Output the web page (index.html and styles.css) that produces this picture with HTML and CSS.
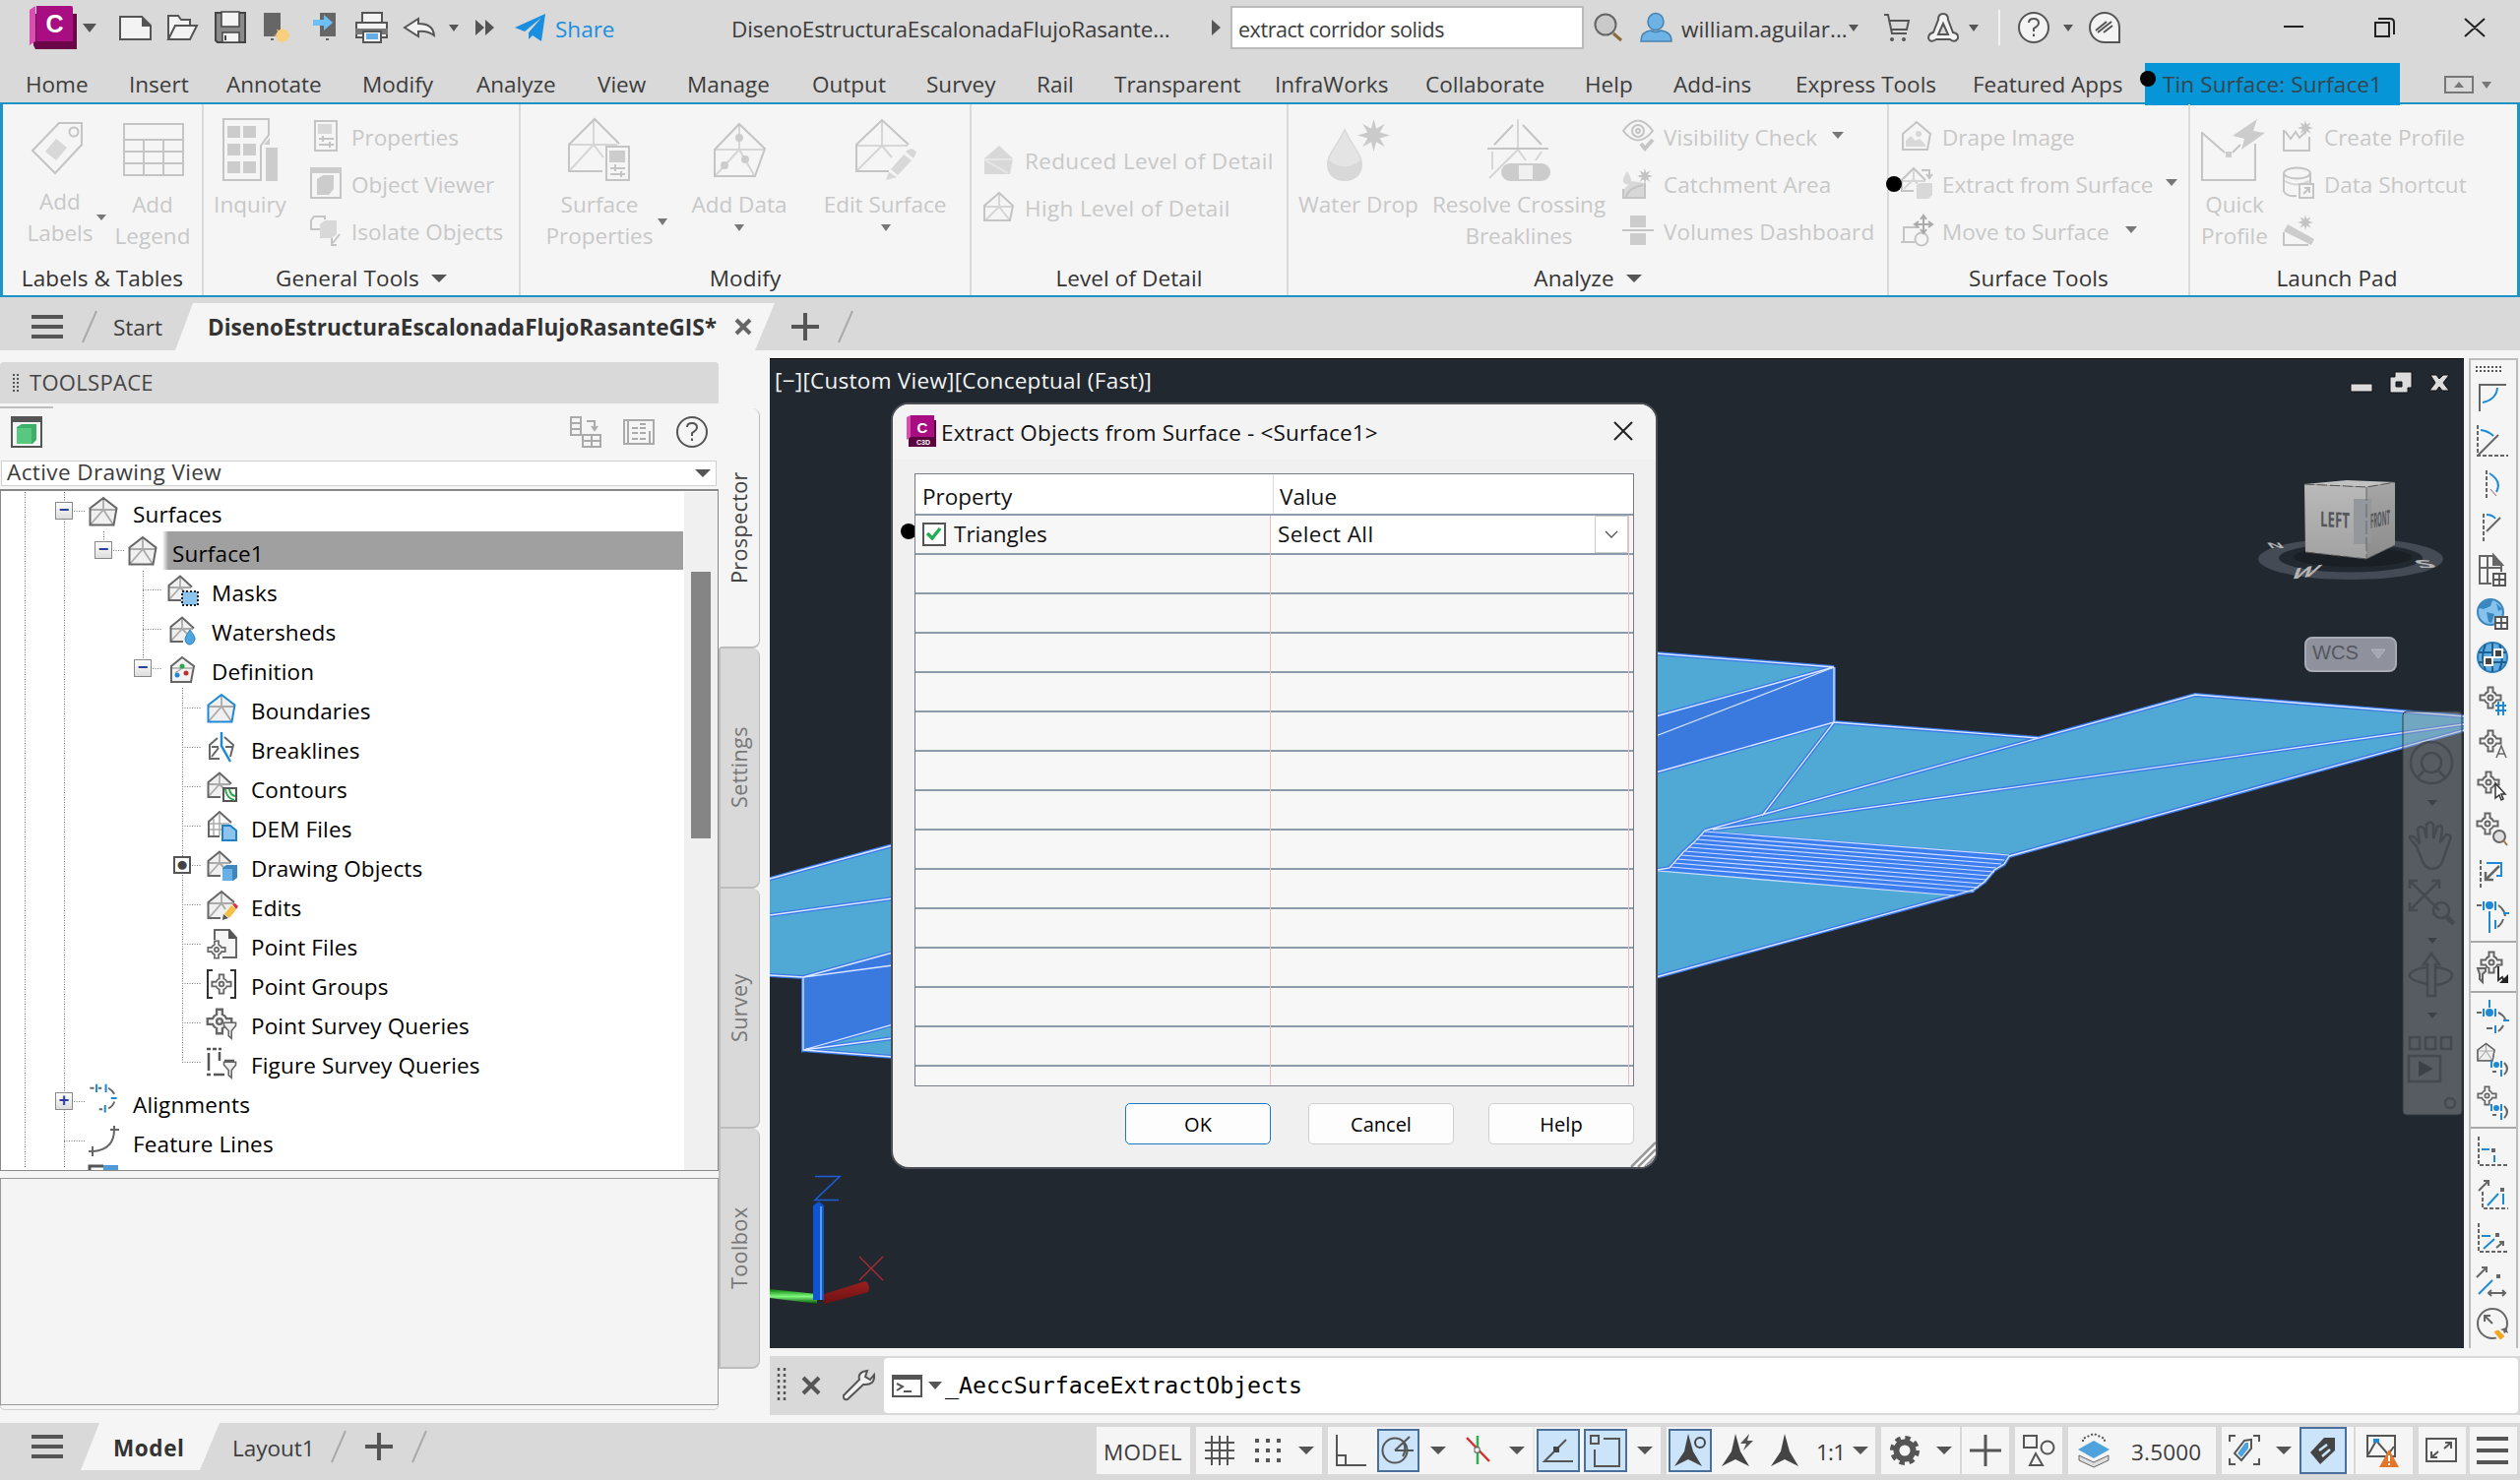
FILE: index.html
```html
<!DOCTYPE html>
<html lang="en">
<head>
<meta charset="utf-8">
<title>DisenoEstructuraEscalonadaFlujoRasanteGIS</title>
<link rel="stylesheet" href="styles.css">
</head>
<body>
<svg class="defs" width="0" height="0">
  <defs>
    <symbol id="surf" viewBox="0 0 30 31"><path class="sf" d="M15 2L28.500 12.500L25.500 29.500H1.500V12.500Z"/><path class="si" d="M15 3V14L2 29M15 14L25 29M2 14H28"/><path class="so" d="M15 2L28.500 12.500L25.500 29.500H1.500V12.500Z"/></symbol>
    <symbol id="surfs" viewBox="0 0 30 31"><path class="sf" d="M13 1.500L25 12.500L14 26H1.500V11Z"/><path class="si" d="M13 3V13L2 25M13 13L18 18M2 13H24"/><path class="so" d="M14 26H1.500V11L13 1.500L25 12.500"/></symbol>
    <symbol id="star" viewBox="0 0 32 32"><path d="M16 0L18.500 9.500L27 4.500L22 13L32 16L22 19L27 27.500L18.500 22.500L16 32L13.500 22.500L5 27.500L10 19L0 16L10 13L5 4.500L13.500 9.500Z"/></symbol>
    <symbol id="pt" viewBox="0 0 24 24"><path d="M9.500 1.500H14.500V6A6 6 0 0 1 18 9.500H22.500V14.500H18A6 6 0 0 1 14.500 18V22.500H9.500V18A6 6 0 0 1 6 14.500H1.500V9.500H6A6 6 0 0 1 9.500 6Z" fill="#f5f5f5" stroke="#666" stroke-width="2"/><circle cx="12" cy="12" r="2.500" fill="none" stroke="#666" stroke-width="2"/></symbol>
    <symbol id="funnel" viewBox="0 0 16 22"><path d="M1 1.500H15V5L10 11V20L6.500 17V11L1 5Z" fill="#eee" stroke="#666" stroke-width="1.800"/></symbol>
    <symbol id="grid4" viewBox="0 0 14 14"><path d="M0 0H14V14H0Z" fill="#f5f5f5"/><path d="M1 1H13V13H1ZM7 1V13M1 7H13" fill="none" stroke="#555" stroke-width="1.800"/></symbol>
    <symbol id="align" viewBox="0 0 32 34"><path d="M0 5H5M10 5H14M22 5Q27 8 29 12M29 21Q27 27 22 29M11 30H15" fill="none" stroke="#666" stroke-width="2.200"/><path d="M8 0V10M19 0V10M25 17H32M18 25V34" stroke="#1e8ad6" stroke-width="2.400"/></symbol>
    <linearGradient id="cubeL" x1="0" y1="0" x2="0" y2="1"><stop offset="0" stop-color="#b9b9b9"/><stop offset="1" stop-color="#a2a2a3"/></linearGradient>
    <linearGradient id="cubeF" x1="0" y1="0" x2="0" y2="1"><stop offset="0" stop-color="#a6a6a6"/><stop offset="1" stop-color="#8c8c8d"/></linearGradient>
    <linearGradient id="red" x1="0" y1="0" x2="0" y2="1"><stop offset="0" stop-color="#9c2020"/><stop offset="1" stop-color="#6c1010"/></linearGradient>
    <linearGradient id="grn" x1="0" y1="0" x2="0" y2="1"><stop offset="0" stop-color="#0a7a0a"/><stop offset=".5" stop-color="#7dfa7d"/><stop offset="1" stop-color="#044a04"/></linearGradient>
  </defs>
</svg>

<header class="titlebar">
  <svg width="110" height="62" viewBox="0 0 110 62"><path d="M34 14H78V50H36L34 46Z" fill="#6a0547"/><path d="M30 10L36 6V42L30 46Z" fill="#d94fb0"/><path d="M37 6H72Q74 6 74 8V42H37Z" fill="#a90d82"/><text x="55.500" y="33" class="logo-c">C</text><path d="M84 24H98L91 33Z" fill="#555"/></svg>
  <svg width="48" height="62" viewBox="110 0 48 62"><path d="M122 17H144L153 26V40H122Z" class="o"/><path d="M144 16L154 27H144Z" fill="#555"/></svg>
  <svg width="50" height="62" viewBox="158 0 50 62"><path d="M171 40V16H181L184 20H193V26" class="o"/><path d="M171 40L178 26H200L193 40Z" class="o"/></svg>
  <svg width="50" height="62" viewBox="208 0 50 62"><path d="M219 13H249V43H221L219 41Z" fill="#8a8a8a" stroke="#444" stroke-width="2"/><path d="M225 12H243V27H225Z" fill="#f3f3f3" stroke="#444" stroke-width="1.500"/><path d="M226 33H243V43H226Z" fill="#f3f3f3" stroke="#444" stroke-width="1.500"/><path d="M229 36V41" stroke="#444" stroke-width="2"/></svg>
  <svg width="50" height="62" viewBox="258 0 50 62"><path d="M268 13H285V37H268Z" fill="#666"/><path d="M275 40H278" stroke="#666" stroke-width="2"/><use href="#star" x="278" y="27" width="18" height="18" fill="#f9cf7c"/><circle cx="287" cy="36" r="6.500" fill="#f9cf7c"/></svg>
  <svg width="46" height="62" viewBox="308 0 46 62"><path d="M325 13H341V37H325Z" fill="#666"/><path d="M331 40H334" stroke="#666" stroke-width="2"/><path d="M318 20H329V15L338 23L329 31V26H318Z" fill="#6cc0f7"/></svg>
  <svg width="50" height="62" viewBox="354 0 50 62"><path d="M368 23V13H388V23" class="o"/><path d="M362 23H393V38H362Z" class="o"/><path d="M361 29H394V35H361Z" fill="#777"/><path d="M369 32H387V43H369Z" class="o"/><path d="M372 34H384V40H372Z" fill="#62ade6"/></svg>
  <svg width="48" height="62" viewBox="404 0 48 62"><path d="M411 28L425 19V24Q440 24 441 36Q434 31 425 32V37Z" class="o"/></svg>
  <svg width="66" height="62" viewBox="452 0 66 62"><path d="M456 25H466L461 32ZM483 20L492 28L483 36ZM493 20L502 28L493 36Z" fill="#555"/></svg>
  <svg width="45" height="62" viewBox="518 0 45 62"><path d="M523 28L554 14L550 42L541 36L537 40V33L550 18L533 32Z" fill="#1a8ee0"/></svg>
  <span class="share">Share</span>
  <span class="doc-title">DisenoEstructuraEscalonadaFlujoRasante...</span>
  <svg width="50" height="62" viewBox="1200 0 50 62"><path d="M1231 20L1240 28L1231 36Z" fill="#555"/></svg>
  <div class="search">extract corridor solids</div>
  <svg width="48" height="62" viewBox="1609 0 48 62"><path d="M1639 34L1647 41" stroke="#8a6a3a" stroke-width="3"/><circle cx="1631" cy="25" r="10.500" fill="#c9c9c9" stroke="#666" stroke-width="2"/></svg>
  <svg width="50" height="62" viewBox="1657 0 50 62"><ellipse cx="1682" cy="22" rx="8" ry="8.500" fill="#6db3e6" stroke="#4682b0" stroke-width="1.500"/><path d="M1667 42Q1667 32 1677 31Q1682 34 1687 31Q1698 32 1698 42Z" fill="#6db3e6" stroke="#4682b0" stroke-width="1.500"/></svg>
  <span class="user">william.aguilar...</span>
  <svg width="28" height="62" viewBox="1876 0 28 62"><path d="M1878 25H1888L1883 32Z" fill="#555"/></svg>
  <svg width="46" height="62" viewBox="1904 0 46 62"><path d="M1914 15H1918L1922 34H1937M1919 21H1939L1937 30H1921" class="n"/><circle cx="1922" cy="40" r="2" fill="#555"/><circle cx="1934" cy="40" r="2" fill="#555"/></svg>
  <svg width="90" height="62" viewBox="1950 0 90 62"><path d="M1974 14Q1979 14 1979 20L1984 33Q1990 34 1989 39Q1986 44 1981 40H1967Q1961 44 1959 39Q1959 34 1964 33L1969 20Q1969 14 1974 14ZM1974 24L1969 35H1979Z" class="o"/><path d="M2000 25H2010L2005 32Z" fill="#555"/><path d="M2031 10V46" stroke="#f2f2f2" stroke-width="2"/></svg>
  <svg width="74" height="62" viewBox="2040 0 74 62"><circle cx="2066" cy="28" r="15" class="o"/><path d="M2061 23Q2061 19 2066 19Q2071 19 2071 23.500Q2071 26 2066 29V32M2066 34.500V37" class="n"/><path d="M2096 25H2106L2101 32Z" fill="#555"/></svg>
  <svg width="60" height="62" viewBox="2114 0 60 62"><path d="M2138 13A15 15 0 1 0 2138 43H2153V28A15 15 0 0 0 2138 13Z" class="o"/><path d="M2129 31L2140 22M2131 33L2145 22M2137 33L2146 26" class="n"/></svg>
  <svg class="win-btns" width="386" height="62" viewBox="2174 0 386 62"><path d="M2320 27H2340M2504 19L2524 37M2524 19L2504 37M2413 23H2427V37H2413ZM2416 19H2428Q2432 19 2432 23V35" fill="none" stroke="#222" stroke-width="2"/></svg>
</header>

<nav class="tabs">
  <span>Home</span><span>Insert</span><span>Annotate</span><span>Modify</span><span>Analyze</span><span>View</span><span>Manage</span><span>Output</span><span>Survey</span><span>Rail</span><span>Transparent</span><span>InfraWorks</span><span>Collaborate</span><span>Help</span><span>Add-ins</span><span>Express Tools</span><span>Featured Apps</span>
  <span class="ctx">Tin Surface: Surface1<i class="dot dot-tab"></i></span>
  <svg width="122" height="40" viewBox="2438 64 122 40"><path d="M2484 78H2512V94H2484Z" fill="none" stroke="#777" stroke-width="2"/><path d="M2493 89H2503L2498 83ZM2521 83H2531L2526 90Z" fill="#777"/></svg>
</nav>

<section class="ribbon">
  <div class="panel w1">
    <div class="body">
      <div class="big b1 up"><svg width="116" height="84" viewBox="3 106 116 84"><path d="M60 125H83V147L56 176L33 153Z"/><circle cx="75" cy="134" r="4.500"/><path class="f" d="M57 141L68 150L57 163L46 154Z"/><path class="a" d="M98 218H108L103 224Z"/></svg><span>Add<br>Labels</span></div>
      <div class="big b2"><svg width="72" height="84" viewBox="119 106 72 84"><path d="M126 126H186V178H126ZM126 142H186M126 154H186M126 166H186M146 142V178M166 142V178"/></svg><span>Add<br>Legend</span></div>
    </div>
    <h3>Labels &amp; Tables</h3>
  </div>
  <div class="panel w2">
    <div class="body">
      <div class="big b3"><svg width="94" height="84" viewBox="207 106 94 84"><path d="M227 121H273V137L265 148V183H227Z"/><path class="f2" d="M231 128h13v12h-13zM247 128h13v12h-13zM231 146h13v12h-13zM247 146h13v12h-13zM231 164h13v12h-13zM247 164h13v12h-13zM268 147L274 140V147ZM270 150h12v34h-12z"/></svg><span>Inquiry</span></div>
      <div class="rows">
        <div class="row"><svg width="56" height="48" viewBox="301 115 56 48"><path d="M320 123H342V153H320ZM324 141H339M324 147H339M328 138V144M335 144V150"/><path class="f" d="M323 126h14v10h-14z"/></svg>Properties</div>
        <div class="row"><svg width="56" height="48" viewBox="301 163 56 48"><path d="M316 171H346V201H316Z"/><path class="f2" d="M315 170h32v6h-32zM322 182L328 178H339V192L334 198H322Z"/></svg>Object Viewer</div>
        <div class="row"><svg width="56" height="48" viewBox="301 211 56 48"><path d="M325 233H316V224L319 220H330V223M345 238L338 247M337 242V249H342"/><path class="f" d="M325 228L330 224H342V238L337 242H325Z"/></svg>Isolate Objects</div>
      </div>
    </div>
    <h3>General Tools <i class="tri"></i></h3>
  </div>
  <div class="panel w3">
    <div class="body">
      <div class="big b4"><svg width="160" height="84" viewBox="529 106 160 84"><path class="l" d="M603 122V147L579 173M603 147L613 160M578 147H627"/><path d="M612 174H578V147L604 121L629 146"/><path d="M616 149H639V183H616ZM620 171H635M620 177H635M625 167V174M631 174V180"/><path class="f2" d="M619 153h16v12h-16z"/><path class="a" d="M668 222H678L673 229Z"/></svg><span>Surface<br>Properties</span></div>
      <div class="big b5"><svg width="124" height="84" viewBox="689 106 124 84"><path class="l" d="M751 127V152L727 178M751 152L766 178M726 152H777"/><path d="M751 126L777 151L767 179H726V152Z"/><path class="f2" d="M747 140a4 4 0 1 0 8 0a4 4 0 1 0-8 0M753 162a4 4 0 1 0 8 0a4 4 0 1 0-8 0M732 168a4 4 0 1 0 8 0a4 4 0 1 0-8 0"/><path class="a" d="M746 228H756L751 235Z"/></svg><span>Add Data</span></div>
      <div class="big b6"><svg width="172" height="84" viewBox="813 106 172 84"><path class="l" d="M896 123V148L871 173M896 148L906 160M870 148H922"/><path d="M903 174H870V147L896 122L923 147"/><path class="f" d="M905 172L918 157L926 163L912 178ZM920 154Q926 148 931 155L928 161ZM900 183L903 175L911 180Z"/><path class="a" d="M895 228H905L900 235Z"/></svg><span>Edit Surface</span></div>
    </div>
    <h3>Modify</h3>
  </div>
  <div class="panel w4">
    <div class="rows lod">
      <div class="row"><svg width="54" height="48" viewBox="987 139 54 48"><path class="f" d="M1015 148L1029 161L1026 177H1000V161Z"/><path class="l2" d="M1000 162H1029M1001 163L1024 176"/></svg>Reduced Level of Detail</div>
      <div class="row"><svg width="54" height="48" viewBox="987 187 54 48"><path class="l" d="M1015 197V210L1001 224M1015 210L1026 224M1000 210H1028"/><path d="M1015 196L1029 209L1026 224H1000V209Z"/></svg>High Level of Detail</div>
    </div>
    <h3>Level of Detail</h3>
  </div>
  <div class="panel w5">
    <div class="body">
      <div class="big b7"><svg width="142" height="84" viewBox="1309 106 142 84"><path class="f" d="M1366 130C1374 148 1384 156 1384 167C1384 178 1376 184 1366 184C1356 184 1348 178 1348 167C1348 156 1358 148 1366 130Z"/><path fill="#e4e4e4" stroke="none" d="M1366 133C1372 147 1380 153 1382 163Q1366 176 1350 163C1352 153 1360 147 1366 133Z"/><use href="#star" x="1379" y="121" width="33" height="33" fill="#cacaca" stroke="none"/></svg><span>Water Drop</span></div>
      <div class="big b8"><svg width="184" height="84" viewBox="1451 106 184 84"><path class="l" d="M1542 121V152L1513 181M1542 152L1550 163M1516 154V172M1566 154L1560 163"/><path d="M1537 127L1518 147M1547 127L1566 147M1511 151H1573"/><rect class="f2" x="1525" y="166" width="50" height="18" rx="9"/><path fill="#f0f0f0" stroke="none" d="M1543 168h14v14h-14z"/></svg><span>Resolve Crossing<br>Breaklines</span></div>
      <div class="rows">
        <div class="row"><svg width="55" height="48" viewBox="1635 115 55 48"><path d="M1649 133Q1664 112 1679 133Q1664 152 1649 133Z"/><circle cx="1664" cy="133" r="6"/><circle cx="1664" cy="133" r="2"/><path d="M1667 146L1671 151L1679 142" stroke-width="4"/></svg>Visibility Check<i class="tri s"></i></div>
        <div class="row"><svg width="55" height="48" viewBox="1635 163 55 48"><path class="f" d="M1653 174Q1658 182 1657 185Q1653 190 1649 185Q1648 182 1653 174ZM1649 193L1658 184L1671 186V202H1649Z"/><path d="M1649 192V201H1671V186M1652 200Q1654 191 1669 188"/><use href="#star" x="1663" y="171" width="16" height="16" fill="#c4c4c4" stroke="none"/></svg>Catchment Area</div>
        <div class="row"><svg width="55" height="48" viewBox="1635 211 55 48"><path d="M1648 234H1680"/><path class="f2" d="M1656 219h16v12h-16zM1656 237h16v12h-16z"/></svg>Volumes Dashboard</div>
      </div>
    </div>
    <h3>Analyze <i class="tri"></i></h3>
  </div>
  <div class="panel w6">
    <i class="dot dot-ribbon"></i>
    <div class="rows">
      <div class="row"><svg width="54" height="48" viewBox="1919 115 54 48"><path d="M1947 124L1961 136L1958 152H1933V136Z"/><path class="f" d="M1936 149V143L1941 138L1946 143L1950 141L1956 147V149Z"/><circle class="f" cx="1949" cy="136" r="3"/></svg>Drape Image</div>
      <div class="row"><svg width="54" height="48" viewBox="1919 163 54 48"><path class="l" d="M1944 172V182L1934 192M1944 182L1948 187M1933 184H1956"/><path d="M1944 194H1932V183L1944 171L1956 183M1952 173H1960V180M1957 177L1960 181L1963 177"/><path class="f" d="M1947 188L1951 186H1963V198L1959 202H1947Z"/></svg>Extract from Surface<i class="tri s"></i></div>
      <div class="row"><svg width="54" height="48" viewBox="1919 211 54 48"><path d="M1950 231H1934V246M1931 246H1945"/><circle cx="1952" cy="243" r="6.500"/><path d="M1954 220V236M1946 228H1962M1951 223L1954 219L1957 223M1951 233L1954 237L1957 233M1949 225L1945 228L1949 231M1959 225L1963 228L1959 231" stroke="#aaa"/></svg>Move to Surface<i class="tri s"></i></div>
    </div>
    <h3>Surface Tools</h3>
  </div>
  <div class="panel w7">
    <div class="body">
      <div class="big b9"><svg width="90" height="84" viewBox="2225 106 90 84"><path d="M2237 134V183H2291V146M2237 135L2260 155M2268 155L2276 147"/><path class="f2" d="M2293 121L2268 138L2280 141L2277 152L2301 135L2289 133ZM2261 154h6v6h-6z"/></svg><span>Quick<br>Profile</span></div>
      <div class="rows">
        <div class="row"><svg width="46" height="48" viewBox="2315 115 46 48"><path d="M2320 132V153H2346V139M2321 133L2327 141L2332 134L2336 140L2342 134"/><use href="#star" x="2334" y="122" width="16" height="16" fill="#c4c4c4" stroke="none"/></svg>Create Profile</div>
        <div class="row"><svg width="46" height="48" viewBox="2315 163 46 48"><path d="M2320 176V194Q2322 200 2333 199M2347 176V186"/><ellipse cx="2333.500" cy="176" rx="13.500" ry="5.500"/><path class="l" d="M2321 184Q2333 191 2346 184"/><path d="M2336 187H2350V201H2336ZM2340 197L2346 191M2341 191H2346V196"/></svg>Data Shortcut</div>
        <div class="row"><svg width="46" height="48" viewBox="2315 211 46 48"><path d="M2320 236V249H2345"/><path class="f2" d="M2320 235L2324 228L2351 243L2348 249Z"/><use href="#star" x="2334" y="218" width="16" height="16" fill="#c4c4c4" stroke="none"/></svg></div>
      </div>
    </div>
    <h3>Launch Pad</h3>
  </div>
</section>

<div class="doctabs">
  <svg width="115" height="54" viewBox="0 302 115 54"><path d="M32 322H64M32 332H64M32 342H64" stroke="#555" stroke-width="4"/><path d="M98 316L84 348" stroke="#aaa" stroke-width="2"/></svg>
  <span class="start">Start</span>
  <div class="active-doc"><b>DisenoEstructuraEscalonadaFlujoRasanteGIS*</b><svg width="20" height="20" viewBox="0 0 20 20"><path d="M3 3L17 17M17 3L3 17" stroke="#666" stroke-width="4"/></svg></div>
  <svg width="100" height="54" viewBox="787 302 100 54"><path d="M804 332H832M818 318V346" stroke="#555" stroke-width="4"/><path d="M866 316L852 348" stroke="#aaa" stroke-width="2"/></svg>
</div>

<main class="work">
  <aside class="toolspace">
    <div class="left">
      <div class="ts-title"><svg width="30" height="42" viewBox="0 368 30 42"><path d="M14 380V400M18 380V400" stroke="#555" stroke-width="2" stroke-dasharray="2 2"/></svg>TOOLSPACE</div>
      <div class="ts-tools">
        <svg width="60" height="58" viewBox="0 410 60 58"><path d="M0 414H54" stroke="#888" stroke-width="1"/><path d="M12 424H42V454H12Z" fill="#f5f5f5" stroke="#555" stroke-width="2"/><path d="M11 423H43V429H11Z" fill="#555"/><path d="M17 434L22 431H37V447L33 451H17Z" fill="#3fae68"/><path d="M17 435H32V451H17Z" fill="#58c880"/></svg>
        <svg width="160" height="58" viewBox="570 410 160 58"><path d="M580 424H590V442H580ZM580 430H590M580 436H590M592 442H610V454H592ZM601 442V454M592 448H610M596 428H604V436M601 433L604 437L607 433" fill="none" stroke="#aaa" stroke-width="2"/><path d="M634 427H664V451H634ZM638 427V451M660 438V451" fill="none" stroke="#aaa" stroke-width="2"/><path d="M642 435H657M642 440H657M642 446H657M650 431H656" fill="none" stroke="#aaa" stroke-width="1.800" stroke-dasharray="6 2"/><circle cx="703" cy="439" r="15" fill="none" stroke="#555" stroke-width="2"/><path d="M698 434Q698 430 703 430Q708 430 708 434.500Q708 437 703 440V443M703 445.500V448" fill="none" stroke="#555" stroke-width="2"/></svg>
      </div>
      <div class="combo"><span>Active Drawing View</span><i class="tri"></i></div>
      <div class="tree">
        <svg class="wires" width="728" height="688" viewBox="1 499 728 688"><path d="M25.500 500V1187M65.500 500V1187M105.500 540V560M145.500 580V680M185.500 699V1079.500M65 519.500H86M105 559.500H126M145 599.500H165M145 639.500H165M145 679.500H165M185 719.500H205M185 759.500H205M185 799.500H205M185 839.500H205M185 879.500H205M185 919.500H205M185 959.500H205M185 999.500H205M185 1039.500H205M185 1079.500H205M65 1119.500H86M65 1159.500H86" fill="none" stroke="#777" stroke-width="1" stroke-dasharray="1 1.500"/></svg>
        <div class="rowsbox">
          <div class="t l1"><i class="ex">−</i><svg width="30" height="31"><use href="#surf"/></svg><span>Surfaces</span></div>
          <div class="t l2 sel"><i class="ex">−</i><svg width="30" height="31"><use href="#surf"/></svg><span>Surface1</span></div>
          <div class="t l3"><svg width="30" height="31" viewBox="0 0 30 31"><use href="#surfs" width="30" height="31"/><path d="M15 17H31V31H15Z" fill="#8cc4ee" stroke="#222" stroke-width="2" stroke-dasharray="2 2"/></svg><span>Masks</span></div>
          <div class="t l3"><svg width="30" height="31" viewBox="0 0 30 31"><use href="#surfs" width="30" height="31" x="2" y="2"/><path d="M23 16Q29 24 28 26Q26 31 23 31Q19 31 18 26Q18 23 23 16Z" fill="#4ea5df" stroke="#2a80c0"/></svg><span>Watersheds</span></div>
          <div class="t l3"><i class="ex">−</i><svg width="30" height="31" viewBox="0 0 30 31"><path d="M15 4L27 13L24 29H4V13Z" fill="#f3f3f3" stroke="#666" stroke-width="2"/><path d="M5 15H26M15 15L8 20" stroke="#aaa" stroke-width="1.500"/><circle cx="15" cy="13" r="2.500" fill="#2aa84a"/><circle cx="10" cy="22" r="2.500" fill="#1e8ad6"/><circle cx="19" cy="20" r="2.500" fill="#c03030"/></svg><span>Definition</span></div>
          <div class="t l4"><svg class="blue" width="30" height="31"><use href="#surf"/></svg><span>Boundaries</span></div>
          <div class="t l4"><svg width="30" height="31" viewBox="0 0 30 31"><path d="M11 6L3 13V27H13M18 5L27 13L24 25M5 25L12 16M5 15H12M19 15H26" fill="none" stroke="#666" stroke-width="2"/><path d="M15 0V14L24 30" fill="none" stroke="#1e8ad6" stroke-width="2.500"/></svg><span>Breaklines</span></div>
          <div class="t l4"><svg width="30" height="31" viewBox="0 0 30 31"><use href="#surfs" width="30" height="31"/><path d="M17 17H30V30H17Z" fill="#fff" stroke="#555" stroke-width="2"/><path d="M19 18Q20 27 28 29M23 18Q24 24 29 25" fill="none" stroke="#2aa84a" stroke-width="2"/></svg><span>Contours</span></div>
          <div class="t l4"><svg width="30" height="31" viewBox="0 0 30 31"><path d="M2 25V11L13 1L25 12M13 26H1" fill="none" stroke="#666" stroke-width="2"/><path d="M7 8V25M13 3V25M3 13H23M3 19H15" stroke="#aaa" stroke-width="1.500"/><path d="M16 15H24L30 20V30H16Z" fill="#8cc4ee" stroke="#1e80c8" stroke-width="2"/></svg><span>DEM Files</span></div>
          <div class="t l4"><i class="ex o">●</i><svg width="30" height="31" viewBox="0 0 30 31"><use href="#surfs" width="30" height="31"/><path d="M16 18L20 15H31V28L27 31H16Z" fill="#3f86bf"/><path d="M16 19H26V31H16Z" fill="#66b0e6"/></svg><span>Drawing Objects</span></div>
          <div class="t l4"><svg width="30" height="31" viewBox="0 0 30 31"><path class="sf" d="M15 2L28 13L17 29H1.500V13Z"/><path class="si" d="M15 3V14L2 29M15 14L19 20M2 14H28"/><path class="so" d="M14 29H1.500V13L15 2L28 13"/><path d="M18 25L25 16L30 20L23 29Z" fill="#f8c040"/><path d="M26 15L29 14L32 17L30 20Z" fill="#e03040"/><path d="M16 31L17 25L22 29Z" fill="#555"/></svg><span>Edits</span></div>
          <div class="t l4"><svg width="30" height="31" viewBox="0 0 30 31"><path d="M8 11V1H23L30 9V29H16" fill="#f5f5f5" stroke="#666" stroke-width="2"/><path d="M22 0L31 10H22Z" fill="#555"/><use href="#pt" x="0" y="11" width="20" height="20"/></svg><span>Point Files</span></div>
          <div class="t l4"><svg width="30" height="31" viewBox="0 0 30 31"><path d="M6 2H1V30H6M24 2H29V30H24" fill="none" stroke="#333" stroke-width="2"/><use href="#pt" x="4" y="5" width="22" height="22"/></svg><span>Point Groups</span></div>
          <div class="t l4"><svg width="30" height="31" viewBox="0 0 30 31"><use href="#pt" x="-1" y="0" width="28" height="28"/><use href="#funnel" x="16" y="14" width="15" height="19"/></svg><span>Point Survey Queries</span></div>
          <div class="t l4"><svg width="30" height="31" viewBox="0 0 30 31"><path d="M0 2H4M6 2H10M12 2H15M2 6V24M0 28H4M7 28H18M13 5V14M18 14H28" stroke="#555" stroke-width="2.500"/><use href="#funnel" x="16" y="14" width="15" height="19"/></svg><span>Figure Survey Queries</span></div>
          <div class="t l1"><i class="ex">+</i><svg width="30" height="31" viewBox="0 0 32 36"><use href="#align" width="32" height="34" y="-3"/></svg><span>Alignments</span></div>
          <div class="t l1"><svg width="30" height="31" viewBox="0 0 30 31"><path d="M0 26H5Q26 24 26 4V0M4 21V31M22 4H31" fill="none" stroke="#666" stroke-width="2"/></svg><span>Feature Lines</span></div>
          <div class="t l1"><svg width="30" height="31" viewBox="0 0 30 31"><path d="M1 31V1H15" fill="none" stroke="#555" stroke-width="3"/><path d="M15 0H30V20H15Z" fill="#4f9bd9"/></svg></div>
        </div>
        <div class="track"><i></i></div>
      </div>
      <div class="preview"></div>
      <div class="foot"></div>
    </div>
    <div class="side"><span class="on">Prospector</span><span>Settings</span><span>Survey</span><span>Toolbox</span></div>
  </aside>

  <div class="right">
    <div class="canvas-row">
      <div class="viewport">
        <svg class="scene" width="1721" height="1006" viewBox="782 364 1721 1006">
          <path d="M782 893L907 859V968L816 993L782 991Z" fill="#50a9d4"/>
          <path d="M816 993L907 968V1041L816 1067Z" fill="#3a7ade"/>
          <path d="M816 1067L907 1041V1074Z" fill="#50a9d4"/>
          <path d="M1682 664L1863 678L1682 728Z" fill="#50a9d4"/>
          <path d="M1682 728L1863 678V734L1682 785Z" fill="#3a7ade"/>
          <path d="M1682 785L1863 734L2070 750L2230 706L2503 728V742L2041 870L2005 904L1682 993Z" fill="#50a9d4"/>
          <path d="M1732 844L2041 868L2005 907L1985 910L1684 884L1696 880Z" fill="#3c7df0"/>
          <g class="edge">
            <path id="edges" d="M782 893L907 859M782 930L907 913M782 991L816 993L907 968M907 981L816 993V1067L907 1041M816 1067L907 1055M816 1067L907 1074M1682 664L1863 678L1682 728M1863 678V734L1682 785M1863 734L1790 829M1863 734L2070 750M1732 844L2230 706L2503 728M1740 843L2503 736M2503 742L2041 870M1682 993L1985 910L2005 904M2041 870L2036 878L2026 884L2016 896L2005 904M1732 844L1722 855L1710 866L1696 882L1684 884"/>
            <use href="#edges" class="hi"/>
            <path class="hi" d="M1863 678L1682 748"/>
          </g>
          <path class="steps" d="M1732 845L2041 869M1728 849L2036 874M1724 853L2033 878M1720 857L2028 882M1716 861L2026 886M1712 865L2022 890M1708 869L2018 894M1704 873L2014 898M1700 877L2010 902M1696 881L2005 906M1684 885L1985 910"/>
          <!-- UCS axes -->
          <path d="M782 1310L830 1315V1325L782 1319Z" fill="url(#grn)"/>
          <path d="M834 1316L879 1302Q885 1306 882 1313L838 1325Z" fill="url(#red)"/>
          <path d="M826 1225L832 1221L837 1225V1321H826Z" fill="#0f55d0"/><path d="M834 1226V1321" stroke="#5c9af8" stroke-width="2"/>
          <path d="M828 1195.500H853L828 1219.500H852" fill="none" stroke="#1d5fd8" stroke-width="1.500"/>
          <path d="M873 1277L897 1301M897 1277L873 1301" stroke="#b02a30" stroke-width="1.300"/>
          <!-- view cube -->
          <path d="M2294 568A94 21 0 0 1 2482 568A94 21 0 0 1 2294 568ZM2315 567A73 14.500 0 0 0 2461 567A73 14.500 0 0 0 2315 567Z" fill="#454b54" fill-rule="evenodd"/>
          <ellipse cx="2390" cy="566" rx="60" ry="10" fill="#1a1e25"/>
          <path d="M2341 492L2384 488L2433 490L2404 495Z" fill="#c2c2c2"/>
          <path d="M2341 492L2404 495V568L2342 561Z" fill="url(#cubeL)"/>
          <path d="M2404 495L2433 490V554L2404 568Z" fill="url(#cubeF)"/>
          <path d="M2391 507H2404V553H2391ZM2404 507L2409 506V551L2404 553Z" fill="#94979c"/>
          <path d="M2404 495V568" stroke="#666" stroke-dasharray="14 3"/><path d="M2341 492L2404 495L2433 490M2342 561L2404 568L2433 554" fill="none" stroke="#555" stroke-dasharray="10 3"/>
          <text x="0" y="0" class="cube" transform="translate(2357 535) skewY(3) scale(1 1.200)" textLength="30" lengthAdjust="spacingAndGlyphs">LEFT</text>
          <text x="0" y="0" class="cube" transform="translate(2408 537) skewY(-12) scale(1 1.150)" textLength="20" lengthAdjust="spacingAndGlyphs">FRONT</text>
          <text class="comp" transform="translate(2325 589) rotate(-8) skewX(-45) scale(1.500 .800)" font-size="18">W</text>
          <text class="comp" transform="translate(2306 557) skewX(40) scale(1.500 .600)" font-size="13">N</text>
          <text class="comp" transform="translate(2458 577) skewX(45) scale(2 .650)" font-size="17">S</text>
          <!-- coordinate system button -->
          <rect x="2342" y="648" width="92" height="34" rx="7" fill="#8f929c" stroke="#a9acb4" stroke-width="2"/>
          <text x="2349" y="670" class="wcs" textLength="47" lengthAdjust="spacingAndGlyphs">WCS</text><path d="M2409 660H2423L2416 669Z" fill="#a4a7b0" stroke="#b3b6be"/>
          <!-- document window buttons -->
          <g fill="#dcdcdc" stroke="#111" stroke-width="1"><path d="M2388 390H2410V398H2388Z"/><path d="M2433 378H2450V394H2446V399H2428V383H2433ZM2434 388V393H2440V388Z" fill-rule="evenodd"/><path d="M2469 381H2475L2478 385L2482 381H2488L2482 389L2488 397H2481L2478 393L2475 397H2468L2474 389Z"/></g>
          <!-- navigation bar -->
          <rect x="2441" y="723" width="60" height="410" rx="4" fill="#a0a4a6" fill-opacity=".42" stroke="#333a40"/>
          <g fill="none" stroke="#454a50" stroke-width="2.500">
            <circle cx="2470" cy="775" r="21"/><circle cx="2470" cy="775" r="10"/><path d="M2463 783L2456 790M2477 783L2484 790"/>
            <path d="M2455 860Q2447 852 2448 850Q2453 848 2458 858L2456 842Q2460 838 2463 843L2465 852V838Q2469 833 2472 838V852L2476 840Q2481 837 2481 843L2479 856L2485 848Q2491 848 2489 853L2481 876Q2478 883 2470 883Q2463 882 2460 873Z"/>
            <path d="M2448 895L2478 925M2478 895L2448 925M2448 903V895H2456M2470 895H2478V903M2448 917V925H2456"/><circle cx="2480" cy="925" r="8"/><path d="M2485 931L2493 939" stroke-width="5"/>
            <path d="M2466 1012V980H2462L2470 969L2478 980H2474V1012Z"/><path d="M2466 1000Q2446 996 2448 990Q2452 984 2466 983M2474 983Q2492 985 2491 992Q2488 1000 2474 1001"/>
            <path d="M2448 1054h10v12h-10zM2464 1054h10v12h-10zM2480 1054h10v12h-10zM2447 1073h32v26h-32z"/><circle cx="2489" cy="1121" r="5"/>
          </g>
          <path d="M2466 813H2476L2471 819ZM2466 953H2476L2471 959ZM2466 1029H2476L2471 1035ZM2457 1078L2472 1086L2457 1094Z" fill="#3c4147"/>
        </svg>
        <span class="vp-label">[−][Custom View][Conceptual (Fast)]</span>
      </div>
      <div class="vtools">
        <svg class="grip" width="46" height="15" viewBox="0 0 46 15"><path d="M5 7H33M5 11H33" stroke="#555" stroke-width="2" stroke-dasharray="2 2"/></svg>
        <svg viewBox="0 0 46 44"><path d="M9 37V10H36"/><path class="b" d="M12 28Q26 25 27 13"/></svg>
        <svg viewBox="0 0 46 44"><path class="d" d="M7 7V38H38"/><path d="M7 38L28 17"/><path class="b" d="M10 12Q18 13 23 18"/></svg>
        <svg viewBox="0 0 46 44"><path class="d" d="M16 9V37"/><path class="b" d="M19 12Q32 20 26 31"/><path d="M20 28L26 35" stroke="#a55" stroke-width="1"/></svg>
        <svg viewBox="0 0 46 44"><path class="d" d="M13 9V37"/><path d="M16 27L30 13"/><path class="b" d="M16 10Q22 10 25 14"/></svg>
        <svg viewBox="0 0 46 44"><path d="M21 36H9V8H23L31 16V24M17 8V36M9 20H30"/><path d="M23 7L32 17H23Z" fill="#666"/><use href="#grid4" x="22" y="25" width="14" height="14"/></svg>
        <svg viewBox="0 0 46 44"><circle cx="20" cy="21" r="13" fill="#85c3ee" stroke="#3a86bd"/><path d="M9 14Q16 8 22 9L20 15L13 18L9 17ZM16 21L24 23L21 32L18 31ZM26 12L32 18L28 20Z" fill="#3a86bd" stroke="none"/><use href="#grid4" x="24" y="25" width="14" height="14"/></svg>
        <svg viewBox="0 0 46 44"><circle cx="22" cy="23" r="15" fill="#62ade2" stroke="#2d7db8"/><path d="M22 8V38M8 18H36M8 28H36M15 10Q9 23 15 36M29 10Q35 23 29 36" stroke="#1d5f93"/><path d="M14 23h8v8h-8zM24 15h8v8h-8z" fill="#444" stroke="#fff"/></svg>
        <svg viewBox="0 0 46 44"><use href="#pt" x="8" y="8" width="24" height="24"/><path class="b" d="M28 24V38M33 24V38M25 28H36M25 33H36"/></svg>
        <svg viewBox="0 0 46 44"><use href="#pt" x="8" y="8" width="24" height="24"/><path d="M26 37L31 25L36 37M28 33H34" stroke-width="1.500"/></svg>
        <svg viewBox="0 0 46 44"><use href="#pt" x="6" y="6" width="24" height="24"/><path d="M25 19V34L29 31L31 36L33 35L31 30H35Z" fill="#fff" stroke="#333" stroke-width="1.500"/></svg>
        <svg viewBox="0 0 46 44"><use href="#pt" x="5" y="4" width="24" height="24"/><circle cx="29" cy="29" r="6" fill="#ddd"/><path d="M33 33L37 38" stroke="#a07040"/></svg>
        <svg viewBox="0 0 46 44"><path class="d" d="M10 9V38"/><path class="b" d="M16 12H31V25H26"/><path d="M29 15L15 29M15 21V29H23" stroke-width="2.500"/></svg>
        <svg viewBox="0 0 46 44"><path d="M6 11H11M28 11Q34 15 35 22M33 25Q31 31 27 33"/><path class="b" d="M13 7V16M25 7V16M19 17V39M25 26V35M33 19H39"/><circle cx="19" cy="11" r="3" fill="#1e8ad6" stroke="#1e8ad6"/></svg>
        <i class="sep"></i>
        <svg viewBox="0 0 46 44"><use href="#pt" x="9" y="6" width="24" height="24"/><path d="M7 24H15V27L12 30V38L9 35V30Z" fill="#ddd"/><path d="M28 22V36L32 33L34 37" fill="#fff" stroke="#333"/><path d="M38 30V39H29Z" fill="#222" stroke="none"/></svg>
        <i class="sep s6"></i>
        <svg viewBox="0 0 46 44"><path d="M6 19H11M28 19Q34 22 35 26M33 32Q31 36 28 38M16 35H22"/><path class="b" d="M19 6V14M13 15V23M25 15V23M25 32V40M33 27H39"/><circle cx="19" cy="19" r="3" fill="#1e8ad6" stroke="#1e8ad6"/></svg>
        <svg viewBox="0 0 46 44"><use href="#surf" x="6" y="5" width="19" height="20"/><path d="M34 26Q40 32 34 38M22 35H26"/><path class="b" d="M21 24V31M31 24V31M31 33V40"/><circle cx="26" cy="28" r="2" fill="#1e8ad6" stroke="#1e8ad6"/></svg>
        <svg viewBox="0 0 46 44"><use href="#pt" x="6" y="5" width="21" height="21"/><path d="M34 26Q40 32 34 38M22 35H26"/><path class="b" d="M21 24V31M31 24V31M31 33V40"/><circle cx="26" cy="28" r="2" fill="#1e8ad6" stroke="#1e8ad6"/></svg>
        <i class="sep"></i>
        <svg viewBox="0 0 46 44"><path class="d" d="M8 6V35H38"/><path class="b" d="M11 19H19M24 25V32"/><path d="M21 18h4v4h-4z" fill="#666" stroke="none"/></svg>
        <svg viewBox="0 0 46 44"><path class="d" d="M12 18V35H38"/><path d="M8 17L18 7M13 7H18V12"/><path class="b" d="M17 32L28 20M33 20V31"/><path d="M30 14h4v4h-4z" fill="#666" stroke="none"/></svg>
        <svg viewBox="0 0 46 44"><path class="d" d="M8 6V35H38"/><path class="b" d="M11 19H20M13 32L24 22"/><path d="M25 16h4v4h-4z" fill="#666" stroke="none"/><path d="M26 31L33 25M29 25H33V29"/></svg>
        <svg viewBox="0 0 46 44"><path d="M6 17L16 7M11 7H16V12M18 33H35M21 30L18 33L21 36M32 30L35 33L32 36"/><path class="b" d="M8 34L22 20"/><path d="M26 14h4v4h-4z" fill="#666" stroke="none"/></svg>
        <svg viewBox="0 0 46 44"><circle cx="22" cy="20" r="15"/><path d="M22 20L14 12M14 18V12H20"/><path d="M22 28L28 25L36 33L30 38Z" fill="#f5a623" stroke="#f5f5f5"/><path d="M30 26L36 24L38 30Z" fill="#666" stroke="none"/></svg>
      </div>
    </div>
    <div class="cmd">
      <svg width="116" height="60" viewBox="782 1378 116 60"><path d="M791 1390V1424M797 1390V1424" stroke="#555" stroke-width="2.500" stroke-dasharray="3 3"/><path d="M816 1400L832 1416M832 1400L816 1416" stroke="#555" stroke-width="4"/><path d="M857 1418L873 1402Q871 1394 881 1393L879 1399L884 1402L888 1397Q889 1408 877 1407L861 1422Q856 1423 857 1418Z" fill="#f0f0f0" stroke="#555" stroke-width="2"/></svg>
      <div class="cmd-in"><svg width="62" height="56" viewBox="898 1380 62 56"><path d="M907 1398H936V1419H907Z" fill="#fff" stroke="#555" stroke-width="2"/><path d="M906 1397H937V1402H906Z" fill="#555"/><path d="M911 1406L917 1409L911 1413M918 1414H926" fill="none" stroke="#555" stroke-width="2"/><path d="M943 1404H957L950 1412Z" fill="#555"/></svg>_AeccSurfaceExtractObjects</div>
    </div>
  </div>

  <div class="dialog">
    <div class="dlg-title"><svg width="49" height="56" viewBox="907 411 49 56"><path d="M923 427H951V454H923Z" fill="#5c0440"/><path d="M921 424L925 422V444L921 447Z" fill="#d94fb0"/><path d="M925 422H949V444H925Z" fill="#a90d82"/><text x="937" y="440" class="c-sm">C</text><text x="938" y="451.500" class="c-xs">C3D</text></svg><span>Extract Objects from Surface - &lt;Surface1&gt;</span><svg class="x" width="30" height="30" viewBox="0 0 30 30"><path d="M6 6L24 24M24 6L6 24" stroke="#222" stroke-width="2"/></svg></div>
    <i class="dot dot-dlg"></i>
    <div class="grid">
      <div class="gr head"><span>Property</span><span>Value</span></div>
      <div class="gr first"><span><svg width="24" height="24" viewBox="0 0 24 24"><path d="M1 1H23V23H1Z" fill="#fff" stroke="#555" stroke-width="2"/><path d="M5 11L10 16L18 6" fill="none" stroke="#23ad55" stroke-width="3.500"/></svg>Triangles</span><span>Select All<i class="dd"><svg width="14" height="9" viewBox="0 0 14 9"><path d="M1 1L7 7L13 1" fill="none" stroke="#555" stroke-width="1.300"/></svg></i></span></div>
      <div class="gr"></div><div class="gr"></div><div class="gr"></div><div class="gr"></div><div class="gr"></div><div class="gr"></div><div class="gr"></div><div class="gr"></div><div class="gr"></div><div class="gr"></div><div class="gr"></div><div class="gr"></div><div class="gr"></div><div class="gr last"></div>
      <i class="pink p1"></i><i class="pink p2"></i>
    </div>
    <div class="btns"><button class="ok">OK</button><button>Cancel</button><button>Help</button></div>
    <svg class="resize" width="26" height="26" viewBox="0 0 26 26"><path d="M0 26L26 0V26Z" fill="#fff"/><path d="M1 26L26 1M8 26L26 8M15 26L26 15" stroke="#999" stroke-width="2.500"/></svg>
  </div>
</main>

<footer class="status">
  <svg width="82" height="58" viewBox="0 1446 82 58"><path d="M32 1460H64M32 1470H64M32 1480H64" stroke="#555" stroke-width="4"/></svg>
  <b class="model">Model</b>
  <span class="layout1">Layout1</span>
  <svg width="120" height="58" viewBox="330 1446 120 58"><path d="M351 1454L337 1486M433 1454L419 1486" stroke="#aaa" stroke-width="2"/><path d="M371 1470H399M385 1456V1484" stroke="#555" stroke-width="4"/></svg>
  <div class="tray">
    <span class="cell mdl">MODEL</span>
    <svg class="cell" width="128" height="48" viewBox="1215 1450 128 48"><path d="M1231 1459V1489M1239 1459V1489M1247 1459V1489M1224 1466H1254M1224 1474H1254M1224 1482H1254" stroke="#555" stroke-width="2"/><path d="M1275 1464H1301M1275 1474H1301M1275 1484H1301" stroke="#555" stroke-width="4" stroke-dasharray="4 7"/><path d="M1319 1470H1335L1327 1478Z" fill="#555"/></svg>
    <svg class="cell" width="338" height="48" viewBox="1349 1450 338 48"><path class="hl" d="M1400 1453H1441V1495H1400ZM1562 1453H1604V1495H1562ZM1610 1453H1652V1495H1610Z"/><path class="k" d="M1358 1458V1489H1388M1358 1479H1367V1489"/><circle cx="1417" cy="1474" r="12.500" class="k"/><path class="k" d="M1417 1474H1436M1417 1474L1432 1460M1426 1466Q1429 1474 1425 1480"/><path d="M1501 1459V1488" stroke="#2fae50" stroke-width="2.500"/><path d="M1490 1461L1513 1485" stroke="#d33030" stroke-width="2.500"/><path d="M1498 1471h5v5h-5z" fill="#fff" stroke="#555"/><path class="k" d="M1591 1463L1569 1485H1598M1616 1459h8v8h-8zM1629 1462H1645V1490H1620V1473"/><path d="M1578 1470h6v6h-6z" fill="#444"/><path d="M1453 1470H1469L1461 1478ZM1533 1470H1549L1541 1478ZM1663 1470H1679L1671 1478Z" fill="#555"/><path d="M1558 1450V1498" stroke="#ddd"/></svg>
    <div class="cell scale"><svg width="152" height="48" viewBox="1693 1450 152 48"><path class="hl" d="M1696 1453H1738V1495H1696Z"/><path id="man" d="M1715 1457L1720 1475L1729 1490L1715 1483L1701 1490L1711 1475Z" fill="#444"/><circle cx="1727" cy="1466" r="5" fill="none" stroke="#444" stroke-width="2"/><use href="#man" x="48"/><path d="M1777 1457L1768 1467H1774L1771 1474L1781 1464H1775Z" fill="#555"/><use href="#man" x="98"/></svg><span>1:1</span><i class="tri"></i></div>
    <svg class="cell" width="80" height="48" viewBox="1911 1450 80 48"><circle cx="1935" cy="1474" r="8.500" fill="none" stroke="#555" stroke-width="6"/><circle cx="1935" cy="1474" r="13" fill="none" stroke="#555" stroke-width="4" stroke-dasharray="5.500 4.700"/><path d="M1967 1470H1983L1975 1478Z" fill="#555"/></svg>
    <svg class="cell g2" width="48" height="48" viewBox="1993 1450 48 48"><path d="M2001 1474H2033M2017 1458V1490" stroke="#555" stroke-width="3"/></svg>
    <svg class="cell" width="48" height="48" viewBox="2047 1450 48 48"><path class="k" d="M2056 1459h13v12h-13zM2062 1489L2068 1477L2075 1489Z"/><circle cx="2080" cy="1471" r="6.500" class="k"/></svg>
    <div class="cell elev"><svg width="64" height="48" viewBox="2101 1450 64 48"><path d="M2112 1479V1484L2127 1491L2142 1484V1479L2127 1486Z" fill="#ddd" stroke="#666"/><path d="M2111 1473L2127 1464L2143 1473L2127 1482Z" fill="#4fa3dc"/><path d="M2116 1465V1462L2127 1457L2138 1462V1465" fill="none" stroke="#555" stroke-width="2" stroke-dasharray="2 2"/></svg><span>3.5000</span></div>
    <svg class="cell" width="134" height="48" viewBox="2257 1450 134 48"><path class="hl" d="M2337 1451H2383V1497H2337Z"/><path class="k" d="M2265 1465V1459H2271M2289 1459H2295V1465M2265 1482V1488H2271M2289 1488H2295V1482"/><path d="M2287 1463V1472L2277 1484L2270 1477L2280 1464Z" fill="#fff" stroke="#555" stroke-width="2"/><path d="M2284 1466V1472L2277 1481L2273 1477L2281 1466Z" fill="#4fa3dc"/><path d="M2312 1470H2328L2320 1478Z" fill="#555"/><path d="M2372 1461V1474L2357 1488L2347 1476L2361 1461Z" fill="#444"/><path d="M2356 1474L2364 1468M2359 1480L2367 1473" stroke="#cce4f9" stroke-width="2.500"/></svg>
    <svg class="cell g2" width="58" height="48" viewBox="2393 1450 58 48"><path class="k" d="M2405 1459H2433V1480H2405ZM2406 1478L2414 1464L2426 1478L2432 1470"/><path d="M2411 1462h6v4h-6z" fill="#1e8ad6"/><path d="M2427 1473L2437 1491H2417Z" fill="#e2762b"/><path d="M2427 1479V1485M2427 1487V1489" stroke="#fff" stroke-width="2"/></svg>
    <svg class="cell" width="48" height="48" viewBox="2457 1450 48 48"><path class="k" d="M2465 1462H2495V1485H2465ZM2470 1481L2477 1475M2470 1475V1481H2476M2490 1466L2483 1472M2484 1466H2490V1472"/></svg>
    <svg class="cell g4" width="48" height="48" viewBox="2509 1450 48 48"><path d="M2516 1462H2548M2516 1474H2548M2516 1486H2548" stroke="#555" stroke-width="4"/></svg>
  </div>
</footer>
</body>
</html>
```
FILE: styles.css
```css
* { box-sizing: border-box; }
body { margin: 0; width: 2560px; height: 1504px; overflow: hidden; display: flex; flex-direction: column; background: #f5f5f5; color: #3c3c3c; font: 22.5px/30px "Open Sans", "Noto Sans", sans-serif; white-space: nowrap; }
svg { display: block; flex: none; overflow: visible; }
.defs { position: absolute; }
i { font-style: normal; display: block; }
.o { fill: #f3f3f3; stroke: #555; stroke-width: 2; }
.n { fill: none; stroke: #555; stroke-width: 2; }
.sf { fill: #f0f0f0; }
.si { fill: none; stroke: #aaa; stroke-width: 1.8; }
.so { fill: none; stroke: var(--e, #666); stroke-width: 2; }
.blue { --e: #1e8ad6; }
.tri { width: 0; height: 0; border: 8px solid transparent; border-top: 8px solid #555; border-bottom: 0; }
.dot { position: absolute; width: 16px; height: 16px; border-radius: 50%; background: #000; }

/* title bar */
.titlebar { height: 64px; display: flex; align-items: flex-start; background: #d9d9d9; flex: none; line-height: 59px; }
.logo-c { font: bold 25px "Liberation Sans", sans-serif; fill: #fff; text-anchor: middle; }
.share { width: 180px; padding-left: 1px; color: #1a8ee0; }
.doc-title { width: 457px; padding-left: 0; letter-spacing: -.15px; }
.search { width: 359px; height: 44px; margin-top: 6px; border: 2px solid #bababa; background: #fff; padding-left: 6px; line-height: 43px; font-size: 21.5px; letter-spacing: -.45px; }
.user { width: 169px; padding-left: 1px; }

/* ribbon tabs */
.tabs { height: 40px; flex: none; display: grid; grid-template-columns: 105px 99px 138px 116px 123px 91px 127px 116px 112px 79px 163px 153px 162px 90px 124px 180px 175px 259px 122px; padding-left: 26px; background: #d9d9d9; line-height: 43px; }
.ctx { position: relative; background: #0696d7; padding-left: 18px; color: #35454f; letter-spacing: .15px; }
.dot-tab { left: -5px; top: 8px; }

/* ribbon */
.ribbon { height: 198px; flex: none; display: flex; border: 2px solid #1e93c6; background: #f5f5f5; border-left-width: 3px; border-right-width: 3px; }
.panel { position: relative; display: flex; flex-direction: column; border-right: 2px solid #dadada; color: #c8c8c8; }
.panel svg { fill: none; stroke: #c4c4c4; stroke-width: 2; }
.panel svg .l { stroke: #d6d6d6; }
.panel svg .l2 { stroke: #e6e6e6; }
.panel svg .f { fill: #d8d8d8; stroke: none; }
.panel svg .f2 { fill: #cccccc; stroke: none; }
.panel svg .a { fill: #777; stroke: none; }
.panel h3 { margin: 0; height: 34px; line-height: 34px; font-size: 22.5px; letter-spacing: .1px; font-weight: 400; color: #333; display: flex; align-items: center; justify-content: center; gap: 12px; }
.body { display: flex; height: 160px; }
.w1 { width: 204px; } .w2 { width: 322px; } .w3 { width: 458px; } .w4 { width: 322px; } .w5 { width: 610px; } .w6 { width: 306px; } .w7 { width: 332px; border-right: 0; }
.w7 h3 { padding-right: 34px; }
.big { display: flex; flex-direction: column; align-items: center; text-align: center; line-height: 32px; }
.big span { margin-top: 2px; }
.up span { margin-top: -1px; }
.b1 { width: 116px; } .b2 { width: 72px; } .b3 { width: 94px; } .b4 { width: 160px; } .b5 { width: 124px; } .b6 { width: 172px; } .b7 { width: 142px; } .b8 { width: 184px; } .b9 { width: 90px; }
.rows { height: 160px; padding-top: 9px; }
.rows.lod { padding-top: 33px; letter-spacing: .35px; }
.row { height: 48px; display: flex; align-items: flex-start; line-height: 50px; }
.w5 .row { letter-spacing: .1px; }
.tri.s { border-width: 6px; border-top-width: 7px; border-bottom: 0; margin: 19px 0 0 15px; border-top-color: #777; }
.w6 .tri.s { margin-left: 13px; }
.w6 .row:nth-child(4) .tri.s, .w6 .row:last-child .tri.s { margin-left: 16px; }
.dot-ribbon { left: -3px; top: 73px; }

/* document tabs */
.doctabs { height: 54px; flex: none; display: flex; background: #d9d9d9; line-height: 62px; }
.start { width: 63px; }
.active-doc { width: 609px; height: 48px; margin-top: 6px; padding-left: 33px; display: flex; align-items: center; gap: 17px; background: #f5f5f5; clip-path: polygon(18px 0, 609px 0, 589px 48px, 0 48px); line-height: 50px; color: #333; }
.active-doc b { width: 517px; letter-spacing: .04px; height: 48px; }

/* work area */
.work { position: relative; height: 1090px; flex: none; display: flex; }
.toolspace { width: 782px; display: flex; padding-top: 12px; }
.left { width: 730px; display: flex; flex-direction: column; }
.ts-title { height: 42px; display: flex; background: #d9d9d9; border-radius: 4px 4px 0 0; line-height: 41px; font-size: 22px; color: #444; letter-spacing: .3px; }
.ts-tools { height: 58px; display: flex; justify-content: space-between; }
.combo { height: 26px; width: 727px; margin-left: 1px; border: 1px solid #d0d0d0; background: #fff; display: flex; align-items: center; justify-content: space-between; padding: 0 5px; line-height: 24px; letter-spacing: .4px; }
.combo span { margin-top: -3px; }
.tree { position: relative; margin-top: 3px; height: 693px; border: 1px solid #888; border-top: 2px solid #888; background: #fff; display: flex; overflow: hidden; color: #000; padding-top: 1px; }
.wires { position: absolute; left: 0; top: 0; }
.rowsbox { width: 694px; }
.t { position: relative; height: 40px; display: flex; align-items: flex-start; }
.t > svg { margin-top: 4px; }
.t > span { margin-left: 15px; line-height: 46px; height: 40px; letter-spacing: .15px; }
.l1 { padding-left: 89px; } .l2 { padding-left: 129px; } .l3 { padding-left: 169px; } .l4 { padding-left: 209px; }
.sel { background: linear-gradient(90deg, transparent 164px, #a0a0a0 170px); background-size: 693px 39px; background-repeat: no-repeat; }
.ex { position: absolute; top: 10px; width: 18px; height: 18px; margin-left: -34px; border: 1px solid #888; background: linear-gradient(#fff, #ddd); color: #2c3f9e; font: bold 18px/15px "Liberation Sans", sans-serif; text-align: center; }
.ex.o { border: 2px solid #555; background: #fff; color: #444; line-height: 12px; font-size: 21px; }
.track { width: 34px; background: #f0f0f0; padding: 81px 7px 0; }
.track i { height: 271px; background: #858585; }
.preview { margin-top: 7px; height: 231px; border: 1px solid #999; background: #f4f4f4; }
.foot { height: 5px; border: 1px solid #d0d0d0; border-top: 0; border-radius: 0 0 6px 6px; }
.side { width: 42px; padding-top: 47px; }
.side span { display: block; width: 42px; height: 244px; border: 2px solid #bcbcbc; border-left-width: 1px; border-bottom-width: 0; border-radius: 8px 0 0 8px; background: #d9d9d9; color: #777; writing-mode: vertical-rl; transform: rotate(180deg); text-align: center; line-height: 38px; font-size: 21.7px; letter-spacing: .3px; }
.side span.on { background: #f5f5f5; color: #444; border-right-color: #f5f5f5; }

/* canvas */
.right { width: 1778px; padding-top: 8px; display: flex; flex-direction: column; }
.canvas-row { display: flex; height: 1006px; }
.viewport { position: relative; width: 1721px; background: #212830; border-top: 1px solid #000; }
.scene { overflow: hidden; margin-top: -1px; }
.vp-label { position: absolute; left: 5px; top: 7px; color: #f4f4f4; letter-spacing: .27px; }
.edge { fill: none; stroke: #3b78e8; stroke-width: 4; }
.edge .hi { stroke: #dbe9ff; stroke-width: 1.3; }
.steps { fill: none; stroke: #cfe0ff; stroke-width: 1.2; }
.cube { font: bold 18px "Open Sans", sans-serif; fill: #54565a; }
.comp { font-family: "Open Sans", sans-serif; font-weight: bold; fill: #b4b4b4; }
.wcs { font: 20px "Liberation Sans", sans-serif; fill: #54575f; }
.vtools { width: 50px; margin-left: 5px; border: 2px solid #bcbcbc; border-bottom: 0; display: flex; flex-direction: column; }
.vtools > svg { width: 46px; height: 44px; fill: none; stroke: #666; stroke-width: 2; }
.vtools > .grip { height: 15px; }
.vtools .b { stroke: #1e8ad6; }
.vtools .d { stroke-dasharray: 4 2; }
.sep { height: 7px; flex: none; background: linear-gradient(transparent 3px, #a8a8a8 3px, #a8a8a8 5px, transparent 5px); }
.sep.s6 { height: 6px; }

/* command line */
.cmd { height: 60px; margin-top: 8px; display: flex; background: #d9d9d9; }
.cmd-in { width: 1660px; height: 56px; margin-top: 2px; background: #fff; border-radius: 4px; display: flex; color: #000; font: 23.2px/55px "DejaVu Sans Mono", monospace; }

/* dialog */
.dialog { position: absolute; left: 907px; top: 55px; width: 775px; height: 775px; border-radius: 16px; background: #f0f0f0; box-shadow: 0 0 0 2px #4b4f55; color: #111; display: flex; flex-direction: column; }
.dlg-title { height: 56px; display: flex; background: #f3f3f3; border-radius: 16px 16px 0 0; line-height: 57px; letter-spacing: .2px; }
.dlg-title span { width: 678px; }
.dlg-title .x { margin-top: 12px; }
.c-sm { font: bold 15px "Liberation Sans", sans-serif; fill: #fff; text-anchor: middle; letter-spacing: 0; }
.c-xs { font: bold 7px "Liberation Sans", sans-serif; fill: #fff; text-anchor: middle; letter-spacing: 0; }
.dot-dlg { left: 8px; top: 121px; }
.grid { position: relative; margin: 14px 0 0 22px; width: 731px; height: 623px; border: 1px solid #777c86; background: #f7f7f7; overflow: hidden; }
.gr { height: 40px; display: flex; border-bottom: 2px solid #8d9cad; }
.gr.head { height: 42px; background: #fff; line-height: 45px; }
.gr.last { border: 0; }
.head span:first-child { width: 364px; padding-left: 7px; border-right: 1px solid #ddd; }
.head span:last-child { padding-left: 6px; }
.first > span { display: flex; align-items: center; line-height: 42px; height: 38px; }
.first span:first-child { width: 361px; padding-left: 7px; gap: 8px; }
.first span:last-child { width: 363px; padding-left: 7px; background: #fff; justify-content: space-between; letter-spacing: .4px; }
.dd { width: 34px; height: 38px; border: 1px solid #ccc; display: flex; align-items: center; justify-content: center; }
.pink { position: absolute; top: 42px; bottom: 0; width: 1px; background: #f3bcbc; }
.p1 { left: 360px; } .p2 { left: 724px; }
.btns { margin: 17px 22px 0 0; display: flex; justify-content: flex-end; }
.btns button { width: 148px; height: 42px; margin: 0 0 0 35px; padding: 0; border: 1px solid #cfcfcf; border-radius: 5px; background: #fdfdfd; font: 20px "Open Sans", sans-serif; color: #000; }
.btns .ok { border: 1.5px solid #1a78c8; }
.btns button:nth-child(2) { margin-left: 38px; }
.resize { position: absolute; right: 0; bottom: 0; border-radius: 0 0 16px 0; overflow: hidden; }

/* status bar */
.status { height: 58px; flex: none; display: flex; background: #d9d9d9; line-height: 52px; }
.model { width: 141px; height: 48px; padding-left: 33px; background: #f5f5f5; clip-path: polygon(19px 0, 141px 0, 121px 48px, 0 48px); color: #333; line-height: 51px; letter-spacing: .6px; }
.layout1 { width: 107px; padding-left: 13px; }
.tray { display: flex; margin: 4px 0 0 664px; gap: 6px; }
.cell { height: 48px; background: #f5f5f5; line-height: 51px; }
.mdl { width: 95px; padding-left: 7px; letter-spacing: .3px; }
.k { fill: none; stroke: #555; stroke-width: 2; }
.hl { fill: #cce4f9; stroke: #4a6f9a; stroke-width: 2; }
.scale { width: 212px; display: flex; }
.scale .tri { margin: 20px 0 0 8px; }
.scale span { letter-spacing: -.8px; }
.elev { width: 150px; display: flex; letter-spacing: .2px; }
.g2 { margin-left: -4px; }
.g4 { margin-left: -2px; }
```
